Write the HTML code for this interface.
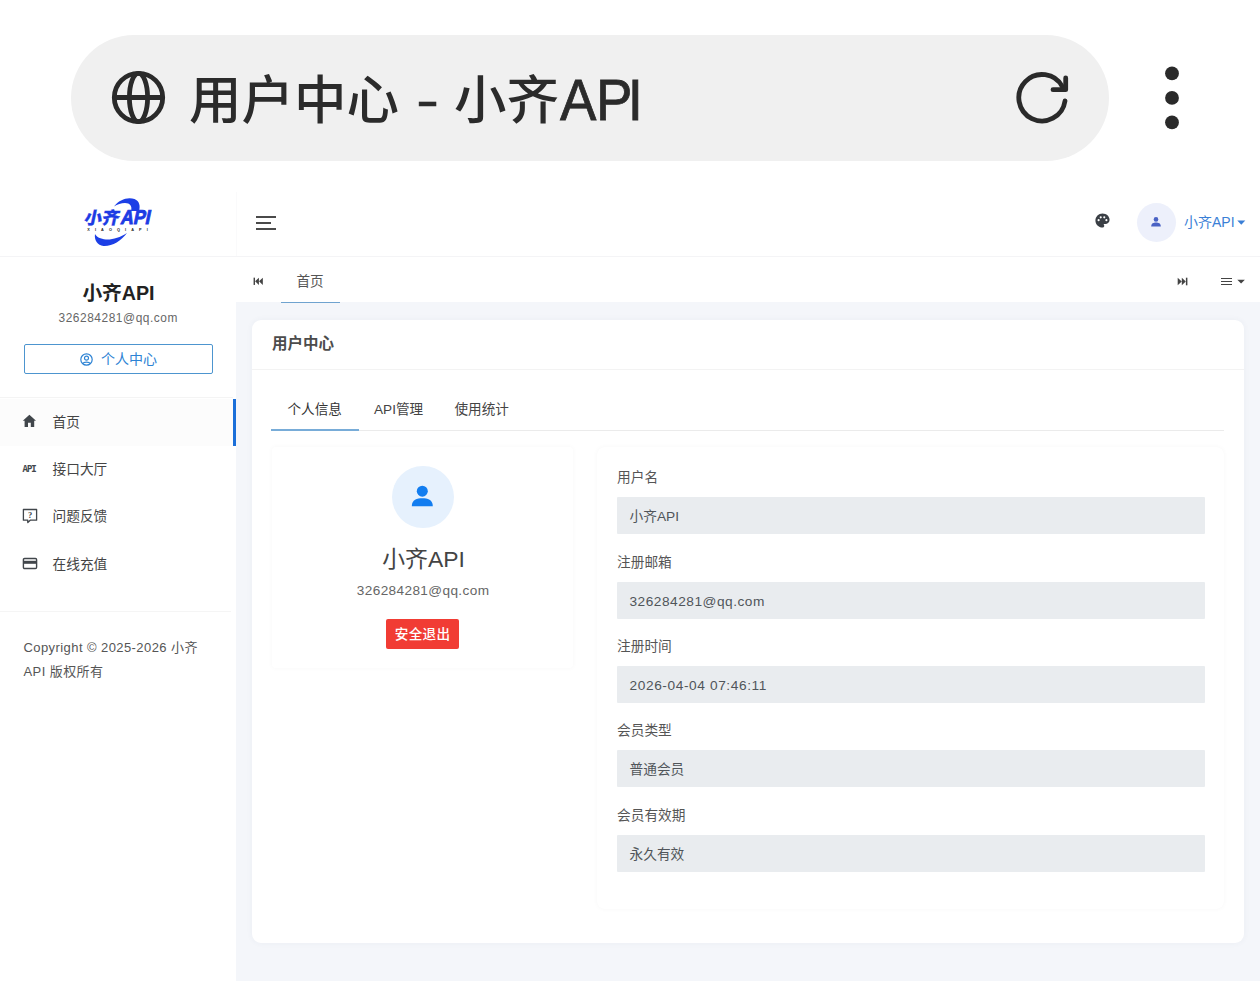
<!DOCTYPE html>
<html lang="zh-CN">
<head>
<meta charset="utf-8">
<title>用户中心 - 小齐API</title>
<style>
*{box-sizing:border-box;margin:0;padding:0}
html,body{width:1260px;height:981px;overflow:hidden;background:#fff}
body{position:relative;font-family:"Liberation Sans","Noto Sans CJK SC",sans-serif;color:#444;font-size:14px}
.abs{position:absolute}
svg{display:block}
/* browser chrome */
#pill{left:71px;top:35px;width:1038px;height:126px;border-radius:63px;background:#f0f0f0}
.tt{top:63px;height:76px;line-height:76px;font-size:52.5px;color:#2b2b2b;white-space:nowrap;font-weight:500}
/* app */
#app{left:0;top:191px;width:1260px;height:790px;background:#f4f6fa}
#side{left:0;top:0;width:236px;height:790px;background:#fff}
#hdr{left:236px;top:0;width:1024px;height:65px;background:#fff}
#hline{left:0;top:65px;width:1260px;height:1px;background:#f4f4f6}
#tabs{left:236px;top:66px;width:1024px;height:44.600px;background:#fff}
#card{left:252px;top:129px;width:992px;height:623px;background:#fff;border-radius:9px;box-shadow:0 0 6px rgba(60,80,120,.05)}
.c{text-align:center}
.menu{left:0;width:234px;height:47px}
.menu span{position:absolute;left:52.500px;top:0;line-height:47.600px;font-size:13.700px;color:#444;white-space:nowrap}
.lab{font-size:13.700px;color:#555;line-height:22px;height:22px}
.inp{width:588px;height:37px;background:#e9ecef;line-height:39.200px;padding-left:12.500px;font-size:13.700px;color:#50555a;border-radius:1px;white-space:nowrap}
.tab{font-size:13.600px;line-height:22px;color:#444;white-space:nowrap}
.box{background:#fff;border-radius:4px;box-shadow:0 0 5px rgba(0,0,0,.035)}
</style>
</head>
<body>
<!-- browser chrome -->
<div id="pill" class="abs"></div>
<svg class="abs" style="left:110px;top:69px" width="58" height="58" viewBox="0 0 58 58" fill="none" stroke="#2a2a2a" stroke-width="4.8">
<circle cx="28.5" cy="28.5" r="24.2"/>
<ellipse cx="28.5" cy="28.5" rx="9.1" ry="24.2"/>
<path d="M4.3 28.5H52.7"/>
</svg>
<div class="abs tt" style="left:189px">用户中心</div>
<div class="abs tt" style="left:415.500px;top:62px;font-weight:400;-webkit-text-stroke:.4px #2b2b2b"><span style="display:inline-block;transform:scaleX(1.32);transform-origin:0 50%">-</span></div>
<div class="abs tt" style="left:454px">小齐</div>
<div class="abs tt" style="left:560px;top:64px;font-weight:400;-webkit-text-stroke:.7px #2b2b2b"><span style="display:inline-block;transform:scale(1.04,1.1);transform-origin:0 79%;letter-spacing:-.5px">AP<span style="margin-left:-4px">I</span></span></div>
<svg class="abs" style="left:1000px;top:50px" width="200" height="100" viewBox="1000 50 200 100" fill="none" stroke="#2a2a2a" stroke-width="4.8" stroke-linecap="round" stroke-linejoin="round">
<path d="M1065 101 A23.2 23.2 0 1 1 1062.5 86.8"/>
<path d="M1065.7 78 V89.7 H1053"/>
<g fill="#2a2a2a" stroke="none"><circle cx="1172" cy="73.4" r="6.9"/><circle cx="1172" cy="97.9" r="6.9"/><circle cx="1172" cy="122.4" r="6.9"/></g>
</svg>

<div id="app" class="abs">
  <div id="side" class="abs">
    <!-- logo -->
    <svg class="abs" style="left:60px;top:-6px" width="120" height="70" viewBox="60 185 120 70">
      <path d="M114 206.5 C119 199.5 128 196.500 134.500 199 C139.500 201 140.500 206 139 211 L131 211 C132.500 206.500 130 203 125 203 C121 203 117.500 204.500 114 206.500Z" fill="#1c3fe6"/>
      <path d="M95 234 C94 240 97.500 245.500 103.500 246 C112 246.500 121 241 127 233 C120 237.500 112 240 106 239.500 C100.500 239 96.500 237 95 234Z" fill="#1c3fe6"/>
      <g font-family="'Liberation Sans','Noto Sans CJK SC',sans-serif" fill="#1d3be4" stroke="#1d3be4" font-style="normal">
        <text x="83.500" y="224" font-weight="900" font-size="17" stroke-width=".3" transform="translate(47.600 0) skewX(-12)" textLength="35" lengthAdjust="spacingAndGlyphs">小齐</text>
        <text x="120" y="224" font-weight="700" font-size="20" stroke-width=".9" transform="translate(47.600 0) skewX(-12)" textLength="29.500" lengthAdjust="spacingAndGlyphs">API</text>
      </g>
      <text x="87.300" y="231.200" font-family="'Liberation Sans',sans-serif" font-weight="700" font-size="3.800" fill="#222" letter-spacing="5.100">XIAOQIAPI</text>
    </svg>
    <div class="abs c" style="left:0;top:87.800px;width:237px;font-size:19.700px;font-weight:700;color:#222;line-height:28px">小齐API</div>
    <div class="abs c" style="left:0;top:118.300px;width:236.500px;font-size:11.900px;letter-spacing:.55px;color:#666;line-height:18px">326284281@qq.com</div>
    <div class="abs" style="left:23.500px;top:152.500px;width:189.500px;height:30px;border:1px solid #4d95cf;border-radius:2px"></div>
    <svg class="abs" style="left:80.200px;top:161.600px" width="13" height="13" viewBox="0 0 13 13" fill="none" stroke="#2d83d4" stroke-width="1.200">
      <circle cx="6.500" cy="6.500" r="5.700"/><circle cx="6.500" cy="5.200" r="2"/><path d="M2.800 10.600 C3.800 8.600 9.200 8.600 10.200 10.600"/>
    </svg>
    <div class="abs" style="left:101px;top:158px;font-size:14px;line-height:21px;color:#2d83d4;white-space:nowrap">个人中心</div>
    <div class="abs" style="left:0;top:206px;width:233px;height:1px;background:#f4f4f4"></div>
    <div class="abs" style="left:0;top:208px;width:233px;height:47px;background:#fcfcfc"></div>
    <div class="abs" style="left:233px;top:208px;width:3px;height:47px;background:#1b6fd9"></div>
    <!-- menu -->
    <svg class="abs" style="left:22px;top:223px" width="15" height="14" viewBox="0 0 15 14" fill="#41464b"><path d="M7.400 0.800 L14 6.800 H12.200 V13 H8.800 V8.800 H6 V13 H2.600 V6.800 H0.800Z"/></svg>
    <div class="abs menu" style="top:208px"><span>首页</span></div>
    <div class="abs" style="left:22.600px;top:274.200px;font-family:'Liberation Mono',monospace;font-weight:700;font-size:9px;line-height:10px;color:#41464b;letter-spacing:-1.100px;transform:scaleY(1.14)">API</div>
    <div class="abs menu" style="top:255px"><span>接口大厅</span></div>
    <svg class="abs" style="left:21.500px;top:316.500px" width="16" height="16" viewBox="0 0 16 16" fill="none" stroke="#41464b" stroke-width="1.300" stroke-linejoin="round"><path d="M1.400 1.500 H14.600 V12.200 H8.200 L5.800 14.600 V12.200 H1.400Z"/><text x="8" y="10" text-anchor="middle" font-family="'Liberation Serif',serif" font-weight="700" font-size="8.500" fill="#41464b" stroke="none">?</text></svg>
    <div class="abs menu" style="top:302px"><span>问题反馈</span></div>
    <svg class="abs" style="left:21.500px;top:366px" width="16" height="13" viewBox="0 0 16 13" fill="none" stroke="#41464b" stroke-width="1.400"><rect x="1.400" y="1.500" width="13.200" height="10" rx="1.200"/><path d="M1.400 5.300 H14.600" stroke-width="3"/></svg>
    <div class="abs menu" style="top:349.500px"><span>在线充值</span></div>
    <div class="abs" style="left:0;top:420px;width:231px;height:1px;background:#f5f5f5"></div>
    <div class="abs" style="left:23.500px;top:445.300px;width:190px;font-size:13px;line-height:23.300px;letter-spacing:.42px;color:#555">Copyright © 2025-2026 小齐API 版权所有</div>
  </div>
  <div id="hdr" class="abs">
    <div class="abs" style="left:20px;top:25px;width:20px;height:2px;background:#4a4a4a"></div>
    <div class="abs" style="left:20px;top:31px;width:15px;height:2px;background:#4a4a4a"></div>
    <div class="abs" style="left:20px;top:37px;width:20px;height:2px;background:#4a4a4a"></div>
    <svg class="abs" style="left:857.500px;top:21.300px" width="17" height="17" viewBox="0 0 24 24" fill="#3a3f45"><path d="M12 2C6.490 2 2 6.490 2 12s4.490 10 10 10c1.380 0 2.500-1.120 2.500-2.500 0-.610-.230-1.200-.640-1.670-.080-.100-.130-.210-.130-.330 0-.280.220-.500.500-.500H16c3.310 0 6-2.690 6-6 0-4.960-4.490-9-10-9zM6.500 13a1.500 1.500 0 1 1 0-3 1.500 1.500 0 0 1 0 3zm3-4a1.500 1.500 0 1 1 0-3 1.500 1.500 0 0 1 0 3zm5 0a1.500 1.500 0 1 1 0-3 1.500 1.500 0 0 1 0 3zm3 4a1.500 1.500 0 1 1 0-3 1.500 1.500 0 0 1 0 3z"/></svg>
    <div class="abs" style="left:900.500px;top:11.500px;width:39px;height:39px;border-radius:50%;background:#edf0fb"></div>
    <svg class="abs" style="left:914px;top:25px" width="12" height="12" viewBox="0 0 12 12" fill="#4a62c4"><circle cx="6" cy="3.400" r="2.300"/><path d="M1.200 10.600 C1.200 7.400 3.600 6.600 6 6.600 C8.400 6.600 10.800 7.400 10.800 10.600Z"/></svg>
    <div class="abs" style="left:948px;top:20px;font-size:14px;line-height:22px;color:#3b7fd6;white-space:nowrap">小齐API</div>
    <svg class="abs" style="left:1000.500px;top:28.500px" width="9" height="6" viewBox="0 0 9 6" fill="#3b7fd6"><path d="M0.300 0.500 H8.300 L4.300 4.800Z"/></svg>
  </div>
  <div id="tabs" class="abs">
    <svg class="abs" style="left:17px;top:19.600px" width="10.500" height="8.600" viewBox="0 0 11 9" fill="#444"><rect x="0.600" y="0.700" width="1.500" height="7.600"/><path d="M6.200 0.700 V8.300 L2.200 4.500Z M10.300 0.700 V8.300 L6.300 4.500Z"/></svg>
    <div class="abs" style="left:60.500px;top:13.600px;font-size:13.600px;line-height:22px;color:#555;white-space:nowrap">首页</div>
    <div class="abs" style="left:45px;top:44.800px;width:59px;height:1.300px;background:#6fa3cf"></div>
    <svg class="abs" style="left:940.500px;top:20px" width="11" height="9" viewBox="0 0 11 9" fill="#444"><rect x="8.900" y="0.700" width="1.500" height="7.600"/><path d="M0.700 0.700 V8.300 L4.700 4.500Z M4.800 0.700 V8.300 L8.800 4.500Z"/></svg>
    <div class="abs" style="left:985px;top:20.500px;width:11px;height:1.400px;background:#444"></div>
    <div class="abs" style="left:985px;top:23.700px;width:11px;height:1.400px;background:#444"></div>
    <div class="abs" style="left:985px;top:26.900px;width:11px;height:1.400px;background:#444"></div>
    <svg class="abs" style="left:1001px;top:22px" width="9" height="6" viewBox="0 0 9 6" fill="#444"><path d="M0.300 0.800 H7.900 L4.100 4.600Z"/></svg>
  </div>
  <div id="hline" class="abs"></div>
  <div class="abs" style="left:235.500px;top:1px;width:1px;height:64px;background:#fafafb"></div>
  <div id="card" class="abs">
    <div class="abs" style="left:20px;top:13px;font-size:15.500px;font-weight:700;line-height:22px;color:#4c4c4c;white-space:nowrap">用户中心</div>
    <div class="abs" style="left:0;top:49px;width:992px;height:1px;background:#f3f3f3"></div>
    <div class="abs" style="left:19px;top:110px;width:953px;height:1px;background:#ebebeb"></div>
    <div class="abs" style="left:19px;top:109px;width:88px;height:1.700px;background:#78acd8"></div>
    <div class="abs tab" style="left:35.5px;top:79px;color:#333">个人信息</div>
    <div class="abs tab" style="left:122px;top:79px">API管理</div>
    <div class="abs tab" style="left:202.5px;top:79px">使用统计</div>
    <div class="abs box" style="left:20px;top:127px;width:301px;height:221px"></div>
    <div class="abs" style="left:139.800px;top:145.700px;width:62px;height:62.300px;border-radius:50%;background:#e6f1fd"></div>
    <svg class="abs" style="left:159px;top:164px" width="23" height="24" viewBox="0 0 23 24" fill="#127df0"><circle cx="11.300" cy="7.200" r="5.500"/><path d="M0.800 22.200 C0.800 15.500 6 14.200 11.300 14.200 C16.600 14.200 21.800 15.500 21.800 22.200Z"/></svg>
    <div class="abs c" style="left:21px;top:221.800px;width:301px;font-size:22.900px;line-height:34px;color:#444">小齐API</div>
    <div class="abs c" style="left:20.600px;top:261.300px;width:301px;font-size:13.600px;letter-spacing:.38px;line-height:20px;color:#666">326284281@qq.com</div>
    <div class="abs c" style="left:134.300px;top:299.200px;width:72.600px;height:30.200px;background:#f13c34;border-radius:2px;color:#fff;font-size:13.600px;font-weight:500;line-height:31.400px;letter-spacing:.3px">安全退出</div>
    <div class="abs box" style="left:345px;top:127px;width:627px;height:461.500px;border-radius:8px"></div>
    <div class="abs lab" style="left:365px;top:147.20px">用户名</div>
    <div class="abs inp" style="left:365px;top:177.10px">小齐API</div>
    <div class="abs lab" style="left:365px;top:231.55px">注册邮箱</div>
    <div class="abs inp" style="left:365px;top:261.50px;letter-spacing:.5px">326284281@qq.com</div>
    <div class="abs lab" style="left:365px;top:315.90px">注册时间</div>
    <div class="abs inp" style="left:365px;top:345.90px;letter-spacing:.6px">2026-04-04 07:46:11</div>
    <div class="abs lab" style="left:365px;top:400.25px">会员类型</div>
    <div class="abs inp" style="left:365px;top:430.30px">普通会员</div>
    <div class="abs lab" style="left:365px;top:484.60px">会员有效期</div>
    <div class="abs inp" style="left:365px;top:514.70px">永久有效</div>
  </div>
</div>
</body>
</html>
